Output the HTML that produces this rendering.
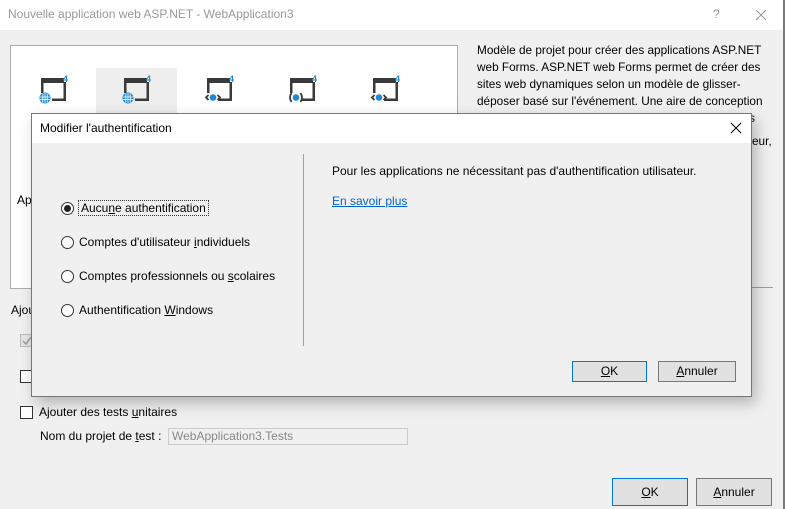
<!DOCTYPE html>
<html><head><meta charset="utf-8"><style>
*{margin:0;padding:0;box-sizing:border-box}
body{width:785px;height:509px;position:relative;overflow:hidden;background:#f0f0f0;font-family:"Liberation Sans",sans-serif;font-size:12px;color:#000}
.a{position:absolute;white-space:nowrap}
u{text-decoration:underline}
.btn{position:absolute;background:#e1e1e1;border:1px solid #adadad;text-align:center;line-height:19px}
.btn.def{border:1px solid #0078d7}
.cb{position:absolute;width:13px;height:13px;border:1px solid #333;background:#fff}
.rb{position:absolute;width:13px;height:13px;border:1px solid #333;border-radius:50%;background:#fff}
</style></head><body>
<div class="a" style="left:0;top:0;width:785px;height:30px;background:#fff"></div>
<div class="a" style="left:8px;top:7px;color:#999;font-size:12px">Nouvelle application web ASP.NET - WebApplication3</div>
<div class="a" style="left:713px;top:7px;color:#999">?</div>
<svg class="a" style="left:755px;top:9px" width="12" height="12"><path d="M1 1L11 11M11 1L1 11" stroke="#999" stroke-width="1"/></svg>
<div class="a" style="left:783px;top:0;width:2px;height:509px;background:#7a7a7a"></div>

<div class="a" style="left:10px;top:45px;width:448px;height:244px;background:#fff;border:1px solid #adadad"></div>
<div class="a" style="left:96px;top:68px;width:81px;height:46px;background:#eeeeee"></div>

<svg class="a" style="left:0;top:0" width="460" height="120">
<defs>
<g id="fr"><rect x="3" y="4" width="23" height="5" fill="#3a3a3a"/><rect x="3" y="4" width="2.5" height="15" fill="#3a3a3a"/><rect x="14" y="24.5" width="14" height="2.5" fill="#3a3a3a"/><rect x="25.5" y="8" width="2.5" height="19" fill="#3a3a3a"/><rect x="24.5" y="0" width="7" height="9" fill="#fff" opacity="0"/><text x="25" y="8" font-family="Liberation Sans" font-weight="bold" font-size="9" fill="#1e88d2">4</text></g>
<g id="gl"><circle cx="7" cy="24" r="5.5" fill="#1e88d2"/><path d="M2 23h10M2 25.5h10M7 19v10M4.8 19.5v9M9.2 19.5v9" stroke="#fff" stroke-width="0.8"/></g>
<g id="cd"><path d="M4.5 21l-2.5 2.5 2.5 2.5M13.5 21l2.5 2.5-2.5 2.5" stroke="#3a3a3a" stroke-width="1.8" fill="none"/><circle cx="9" cy="23.5" r="3.3" fill="#1e88d2"/></g>
<g id="pr"><path d="M4.5 19q-3 4.5 0 9M13.5 19q3 4.5 0 9" stroke="#3a3a3a" stroke-width="1.8" fill="none"/><circle cx="9" cy="23.5" r="3.3" fill="#1e88d2"/></g>
</defs>
<g transform="translate(38,74)"><use href="#fr"/><use href="#gl"/></g>
<g transform="translate(121,74)"><use href="#fr"/><use href="#gl"/></g>
<g transform="translate(204,74)"><use href="#fr"/><use href="#cd"/></g>
<g transform="translate(287,74)"><use href="#fr"/><use href="#pr"/></g>
<g transform="translate(370,74)"><use href="#fr"/><use href="#cd"/></g>
</svg>

<div class="a" style="left:477px;top:42px;line-height:17px;font-size:11.8px">Modèle de projet pour créer des applications ASP.NET<br>web Forms. ASP.NET web Forms permet de créer des<br>sites web dynamiques selon un modèle de glisser-<br>déposer basé sur l'événement. Une aire de conception<br>et des centaines de contrôles et de composants vous</div>
<div class="a" style="left:752px;top:134px;font-size:11.8px">eur,</div>
<div class="a" style="left:460px;top:287px;width:313px;height:1px;background:#a0a0a0"></div>
<div class="a" style="left:17px;top:193px">Ap</div>
<div class="a" style="left:11px;top:303px">Ajou</div>
<div class="cb" style="left:20px;top:334px;border-color:#bbb;background:#e6e6e6"></div>
<svg class="a" style="left:22px;top:336px" width="10" height="10"><path d="M1 5l3 3 5-7" stroke="#999" stroke-width="1.5" fill="none"/></svg>
<div class="cb" style="left:20px;top:370px"></div>
<div class="cb" style="left:20px;top:406px"></div>
<div class="a" style="left:39px;top:405px">Ajouter des tests <u>u</u>nitaires</div>
<div class="a" style="left:40px;top:429px">Nom du projet de <u>t</u>est :</div>
<div class="a" style="left:168px;top:428px;width:240px;height:17px;border:1px solid #ccc;background:#f0f0f0;color:#888;padding-left:3px;line-height:15px">WebApplication3.Tests</div>
<div class="btn def" style="left:612px;top:478px;width:76px;height:28px;line-height:26px"><u>O</u>K</div>
<div class="btn" style="left:696px;top:478px;width:76px;height:28px;border-color:#777;line-height:26px"><u>A</u>nnuler</div>

<!-- modal -->
<div class="a" style="left:31px;top:113px;width:721px;height:284px;background:#f0f0f0;border:1px solid #777;box-shadow:4px 6px 14px rgba(0,0,0,0.25)"></div>
<div class="a" style="left:32px;top:114px;width:719px;height:29px;background:#fff"></div>
<div class="a" style="left:40px;top:121px">Modifier l'authentification</div>
<svg class="a" style="left:730px;top:122px" width="12" height="12"><path d="M1 1L11 11M11 1L1 11" stroke="#000" stroke-width="1"/></svg>
<div class="a" style="left:303px;top:154px;width:1px;height:192px;background:#a0a0a0"></div>
<div class="rb" style="left:61px;top:202px"></div>
<div class="a" style="left:64px;top:205px;width:7px;height:7px;border-radius:50%;background:#222"></div>
<div class="a" style="left:78px;top:200px;border:1px dotted #333;padding:0 2px;line-height:14px">Aucu<u>n</u>e authentification</div>
<div class="rb" style="left:61px;top:236px"></div>
<div class="a" style="left:79px;top:235px">Comptes d'utilisateur <u>i</u>ndividuels</div>
<div class="rb" style="left:61px;top:270px"></div>
<div class="a" style="left:79px;top:269px">Comptes professionnels ou <u>s</u>colaires</div>
<div class="rb" style="left:61px;top:304px"></div>
<div class="a" style="left:79px;top:303px">Authentification <u>W</u>indows</div>
<div class="a" style="left:332px;top:164px">Pour les applications ne nécessitant pas d'authentification utilisateur.</div>
<div class="a" style="left:332px;top:194px;color:#0066cc;text-decoration:underline">En savoir plus</div>
<div class="btn def" style="left:572px;top:361px;width:75px;height:21px"><u>O</u>K</div>
<div class="btn" style="left:658px;top:361px;width:78px;height:21px;border-color:#777"><u>A</u>nnuler</div>
</body></html>
